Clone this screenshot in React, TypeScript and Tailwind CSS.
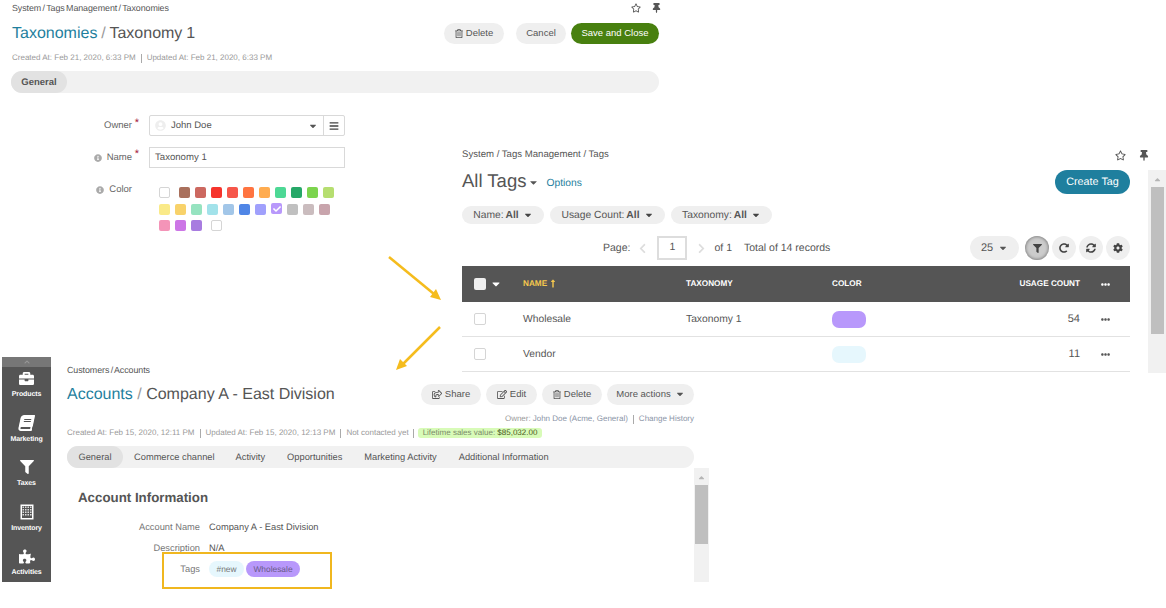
import React from 'react'
import {
  FaRegStar, FaThumbtack, FaRegTrashAlt, FaBars, FaInfoCircle, FaCheck, FaCaretDown, FaCaretUp, FaChevronLeft, FaChevronRight,
  FaChevronUp, FaFilter, FaRedoAlt, FaSyncAlt, FaCog, FaEllipsisH, FaLongArrowAltUp, FaRegShareSquare, FaRegEdit,
  FaBriefcase, FaBook, FaPuzzlePiece, FaUserCircle,
} from 'react-icons/fa'

const teal = 'text-[#1f7f9e]'

function Pill({ children, className = '' }: { children: React.ReactNode; className?: string }) {
  return <button className={`h-[21px] rounded-full bg-[#efefef] text-[#555] text-[9.5px] flex items-center justify-center gap-[3px] ${className}`}>{children}</button>
}

function Crumb({ children }: { children: React.ReactNode }) {
  return <div className="text-[8.9px] leading-[12px] text-[#555] tracking-[-0.07px] [word-spacing:-1px]">{children}</div>
}

function Required() {
  return <span className="absolute -right-[7px] -top-[1px] text-[#a3183a] text-[11px] leading-[11px]">*</span>
}

const row1 = ['#a9705c', '#cc6860', '#f6342c', '#f6564a', '#ff7440', '#ffac50', '#4dd895', '#26a868', '#7cd44e', '#b6de70']
const row2 = ['#faea88', '#f8d26a', '#96e3c0', '#a2e2ea', '#a2c6e8', '#5086e6', '#a0a0fc', '#b898fb', '#c0c0c0', '#cabcbe', '#c8a4ac']
const row3 = ['#f494b8', '#cc76e6', '#a87ce0']

function Swatch({ color, checked }: { color?: string; checked?: boolean }) {
  return (
    <span
      className={`w-[11px] h-[11px] rounded-[2px] flex items-center justify-center ${color ? '' : 'border border-[#d5d5d5] bg-white'} ${checked ? '-translate-y-[1px]' : ''}`}
      style={color ? { backgroundColor: color } : undefined}
    >
      {checked && <FaCheck className="text-white w-[8px] h-[8px]" />}
    </span>
  )
}

function TaxonomyWindow() {
  return (
    <div className="absolute left-0 top-0 w-[665px] h-[240px] bg-white">
      <div className="pl-[12px] pr-[4px] pt-[2px] flex justify-between items-center">
        <Crumb>System / Tags Management / Taxonomies</Crumb>
        <div className="flex items-center gap-[11px] text-[#555]">
          <FaRegStar className="w-[10px] h-[10px]" />
          <FaThumbtack className="w-[9px] h-[10px]" />
        </div>
      </div>
      <div className="pl-[12px] pr-[6px] mt-[9px] flex items-center justify-between">
        <h1 className="text-[16px] leading-[21px] text-[#555] [word-spacing:-0.5px]"><span className={teal}>Taxonomies</span> <span className="text-[#999]">/</span> Taxonomy 1</h1>
        <div className="flex items-center">
          <Pill className="w-[60px] mr-[12px]"><FaRegTrashAlt className="w-[8px] h-[9px]" /> Delete</Pill>
          <Pill className="w-[50px] mr-[5px]">Cancel</Pill>
          <Pill className="w-[88px] !bg-[#48800f] !text-white">Save and Close</Pill>
        </div>
      </div>
      <div className="pl-[12px] mt-[8px] text-[8px] leading-[12px] text-[#999] flex items-center">
        Created At: Feb 21, 2020, 6:33 PM<span className="w-px h-[9px] bg-[#aaa] mx-[5px]" />Updated At: Feb 21, 2020, 6:33 PM
      </div>
      <div className="ml-[11px] w-[648px] mt-[7px] h-[22px] rounded-full bg-[#f1f1f1]">
        <div className="w-[56px] h-[22px] rounded-full bg-[#e2e2e2] text-[#555] text-[9.5px] font-bold flex items-center justify-center pt-[2px]">General</div>
      </div>
      <div className="mt-[22px] flex flex-col">
        <div className="flex items-center h-[21px]">
          <div className="w-[132px] flex justify-end text-[#666] text-[9.5px] pt-[1px]"><span className="relative">Owner<Required /></span></div>
          <div className="ml-[17px] w-[196px] h-[21px] border border-[#d9d9d9] rounded-[2px] flex items-center text-[9.5px] text-[#555]">
            <FaUserCircle className="w-[11px] h-[11px] text-[#eee] ml-[5px] mr-[5px]" />
            <span className="flex-1 pt-[1px]">John Doe</span>
            <FaCaretDown className="w-[10px] h-[10px] text-[#555] mr-[5px]" />
            <span className="w-[21px] h-full border-l border-[#d9d9d9] flex items-center justify-center"><FaBars className="w-[10px] h-[10px] text-[#444]" /></span>
          </div>
        </div>
        <div className="flex items-center h-[21px] mt-[11px]">
          <div className="w-[132px] flex justify-end items-center text-[#666] text-[9.5px]">
            <FaInfoCircle className="w-[8px] h-[8px] text-[#aaa] mr-[5px]" /><span className="relative pt-[1px]">Name<Required /></span>
          </div>
          <div className="ml-[17px] w-[196px] h-[21px] border border-[#d9d9d9] pl-[5px] pt-[1px] flex items-center text-[9.6px] text-[#555]">Taxonomy 1</div>
        </div>
        <div className="flex items-start mt-[16px]">
          <div className="w-[132px] flex justify-end items-center text-[#666] text-[9.5px] leading-[12px]">
            <FaInfoCircle className="w-[8px] h-[8px] text-[#aaa] mr-[5px]" />Color
          </div>
          <div className="ml-[27px] mt-[3px] flex flex-col gap-[5px]">
            <div className="flex gap-[5px]">
              <span className="mr-[4px]"><Swatch /></span>
              {row1.map(c => <Swatch key={c} color={c} />)}
            </div>
            <div className="flex gap-[5px] mt-[1px]">
              {row2.map((c, i) => <Swatch key={c} color={c} checked={i === 7} />)}
            </div>
            <div className="flex gap-[5px]">
              {row3.map(c => <Swatch key={c} color={c} />)}
              <span className="ml-[4px]"><Swatch /></span>
            </div>
          </div>
        </div>
      </div>
    </div>
  )
}

function RoundBtn({ children, active }: { children: React.ReactNode; active?: boolean }) {
  return (
    <span className={`w-[24px] h-[24px] rounded-full flex items-center justify-center text-[#444] ${active ? 'bg-[#ccc] shadow-[inset_0_0_3px_1px_#888]' : 'bg-[#efefef]'}`}>{children}</span>
  )
}

function FilterPill({ label, width }: { label: string; width: string }) {
  return (
    <span className={`h-[18px] ${width} rounded-full bg-[#efefef] text-[10.3px] text-[#555] flex items-center justify-center gap-[4px]`}>
      <span className="pt-[1px]">{label}: <b className="font-bold -ml-[1px]">All</b></span><FaCaretDown className="w-[10px] h-[10px] text-[#444]" />
    </span>
  )
}

function TagRow({ name, taxonomy, color, count }: { name: string; taxonomy?: string; color: string; count: number }) {
  return (
    <div className="flex items-center h-[35px] border-b border-[#e2e2e2] text-[10.3px] text-[#555]">
      <span className="ml-[12px] w-[12px] h-[12px] border border-[#d5d5d5] rounded-[2px] bg-white" />
      <span className="ml-[37px] w-[163px] pt-[1px]">{name}</span>
      <span className="w-[146px] pt-[1px]">{taxonomy}</span>
      <span className="w-[34px] h-[17px] rounded-[7px]" style={{ backgroundColor: color }} />
      <span className="w-[214px] text-right text-[11px]">{count}</span>
      <FaEllipsisH className="ml-[21px] w-[9px] h-[9px] text-[#555]" />
    </div>
  )
}

function TagsWindow() {
  return (
    <div className="absolute left-[450px] top-[140px] w-[716px] h-[233px] bg-white overflow-hidden flex">
      <div className="ml-[12px] w-[668px]">
        <div className="pt-[9px] flex justify-between items-center">
          <div className="text-[9.6px] leading-[12px] text-[#555]">System / Tags Management / Tags</div>
          <div className="flex items-center gap-[13px] text-[#555] -mr-[19px]">
            <FaRegStar className="w-[11px] h-[11px]" />
            <FaThumbtack className="w-[10px] h-[11px]" />
          </div>
        </div>
        <div className="flex justify-between items-center mt-[9px]">
          <div className="flex items-center text-[#555]">
            <h2 className="text-[18.5px] leading-[24px] -mt-[2px]">All Tags</h2>
            <FaCaretDown className="w-[11px] h-[11px] ml-[2px]" />
            <span className={`ml-[7px] mt-[3px] text-[10.3px] ${teal}`}>Options</span>
          </div>
          <span className="w-[75px] h-[24px] rounded-full bg-[#1f7f9e] text-white text-[10.8px] flex items-center justify-center">Create Tag</span>
        </div>
        <div className="flex gap-[6px] mt-[12px]">
          <FilterPill label="Name" width="w-[82px]" />
          <FilterPill label="Usage Count" width="w-[115px]" />
          <FilterPill label="Taxonomy" width="w-[101px]" />
        </div>
        <div className="flex items-center h-[24px] mt-[12px] text-[10.5px] text-[#555]">
          <span className="ml-[141px] pt-[2px]">Page:</span>
          <FaChevronLeft className="ml-[8px] w-[9px] h-[11px] text-[#ddd]" />
          <span className="ml-[10px] w-[30px] h-[24px] border-2 border-[#ddd] flex items-center justify-center">1</span>
          <FaChevronRight className="ml-[10px] w-[9px] h-[11px] text-[#ddd]" />
          <span className="ml-[8px] pt-[2px]">of 1</span>
          <span className="ml-[12px] pt-[2px]">Total of 14 records</span>
          <div className="ml-auto flex items-center gap-[3px]">
            <span className="w-[49px] h-[24px] mr-[3px] rounded-full bg-[#efefef] flex items-center justify-center gap-[5px] text-[11px]">25<FaCaretDown className="w-[10px] h-[10px]" /></span>
            <RoundBtn active><FaFilter className="w-[9px] h-[9px]" /></RoundBtn>
            <RoundBtn><FaRedoAlt className="w-[10px] h-[10px]" /></RoundBtn>
            <RoundBtn><FaSyncAlt className="w-[10px] h-[10px]" /></RoundBtn>
            <RoundBtn><FaCog className="w-[10px] h-[10px]" /></RoundBtn>
          </div>
        </div>
        <div className="flex items-center h-[36px] mt-[6px] bg-[#555] text-white text-[8.2px] font-bold">
          <span className="ml-[12px] w-[12px] h-[12px] bg-[#eee] rounded-[2px]" />
          <FaCaretDown className="ml-[4px] w-[12px] h-[12px]" />
          <span className="ml-[21px] w-[163px] text-[#f5c84e] flex items-center gap-[2px]">NAME<FaLongArrowAltUp className="w-[8px] h-[9px]" /></span>
          <span className="w-[146px]">TAXONOMY</span>
          <span className="w-[34px]">COLOR</span>
          <span className="w-[214px] text-right">USAGE COUNT</span>
          <FaEllipsisH className="ml-[21px] w-[9px] h-[9px]" />
        </div>
        <TagRow name="Wholesale" taxonomy="Taxonomy 1" color="#b898fb" count={54} />
        <TagRow name="Vendor" color="#e6f7fd" count={11} />
      </div>
      <div className="ml-[18px] mt-[30px] w-[18px] bg-[#f1f1f1] flex flex-col items-center">
        <FaCaretUp className="w-[9px] h-[9px] text-[#b5b5b5] mt-[5px]" />
        <div className="w-[13px] h-[147px] bg-[#bfbfbf] mt-[3px]" />
      </div>
    </div>
  )
}

const navItems = [
  { label: 'Products', icon: <FaBriefcase className="w-[17px] h-[15px]" />, height: 'h-[45px]' },
  { label: 'Marketing', icon: <FaBook className="w-[15px] h-[16px] -skew-x-12" />, height: 'h-[44px]' },
  { label: 'Taxes', icon: <FaFilter className="w-[14px] h-[14px]" />, height: 'h-[45px]' },
  { label: 'Inventory', icon: <BuildingIcon />, height: 'h-[44px]' },
  { label: 'Activities', icon: <FaPuzzlePiece className="w-[16px] h-[15px]" />, height: 'h-[40px]' },
]

function BuildingIcon() {
  return (
    <svg viewBox="0 0 14 16" className="w-[14px] h-[16px]" fill="none">
      <rect x="0.5" y="0.5" width="13" height="15" fill="#fff" />
      <rect x="2" y="2" width="10" height="12" fill="#555" />
      {[2.5, 5, 7.5, 10].map(x => [2.5, 5, 7.5, 10].map(y => <rect key={`${x}-${y}`} x={x} y={y} width="1.5" height="1.5" fill="#ddd" />))}
    </svg>
  )
}

function SideNav() {
  return (
    <div className="w-[49px] h-full bg-[#555] text-white shrink-0">
      <div className="h-[10px] bg-[#777] flex items-center justify-center"><FaChevronUp className="w-[6px] h-[6px] text-[#999]" /></div>
      {navItems.map(n => (
        <div key={n.label} className={`${n.height} flex flex-col items-center justify-start pt-[2px]`}>
          <div className="h-[18px] flex items-center justify-center">{n.icon}</div>
          <div className="text-[7px] leading-[10px] font-bold mt-[3px] tracking-[-0.1px]">{n.label}</div>
        </div>
      ))}
    </div>
  )
}

function AccountWindow() {
  return (
    <div className="absolute left-[2px] top-[357px] w-[707px] h-[225px] bg-white flex">
      <SideNav />
      <div className="pl-[16px] w-[643px] shrink-0">
        <div className="pt-[7px]"><Crumb>Customers / Accounts</Crumb></div>
        <div className="mt-[5px] h-[26px] flex items-center justify-between">
          <h1 className="text-[16px] leading-[21px] text-[#555]"><span className={teal}>Accounts</span> <span className="text-[#999]">/</span> Company A - East Division</h1>
          <div className="flex items-center gap-[5px]">
            <Pill className="w-[60px]"><FaRegShareSquare className="w-[10px] h-[9px]" /> Share</Pill>
            <Pill className="w-[51px]"><FaRegEdit className="w-[10px] h-[9px]" /> Edit</Pill>
            <Pill className="w-[60px]"><FaRegTrashAlt className="w-[8px] h-[9px]" /> Delete</Pill>
            <Pill className="w-[87px] gap-[4px]">More actions <FaCaretDown className="w-[10px] h-[10px]" /></Pill>
          </div>
        </div>
        <div className="mt-[6px] flex justify-end items-center text-[8px] leading-[12px] text-[#999]">
          Owner: <span className="text-[#8a94a6] ml-[2px]">John Doe (Acme, General)</span><span className="w-px h-[9px] bg-[#aaa] mx-[5px]" /><span className="text-[#8a94a6]">Change History</span>
        </div>
        <div className="mt-[2px] flex items-center text-[8px] leading-[12px] text-[#999]">
          Created At: Feb 15, 2020, 12:11 PM<span className="w-px h-[9px] bg-[#aaa] mx-[5px]" />Updated At: Feb 15, 2020, 12:13 PM<span className="w-px h-[9px] bg-[#aaa] mx-[5px]" />Not contacted yet<span className="w-px h-[9px] bg-[#aaa] mx-[4px]" />
          <span className="h-[10px] px-[5px] rounded-[3px] bg-[#d8fbb8] flex items-center text-[#7a8a6a]">Lifetime sales value:&nbsp;<span className="text-[#4a5a20]">$85,032.00</span></span>
        </div>
        <div className="mt-[7px] h-[22px] rounded-full bg-[#f1f1f1] flex items-center text-[9.3px] text-[#555]">
          <span className="w-[56px] h-[22px] rounded-full bg-[#e2e2e2] flex items-center justify-center pt-[2px]">General</span>
          <span className="ml-[11px] pt-[2px]">Commerce channel</span>
          <span className="ml-[21px] pt-[2px]">Activity</span>
          <span className="ml-[22px] pt-[2px]">Opportunities</span>
          <span className="ml-[22px] pt-[2px]">Marketing Activity</span>
          <span className="ml-[22px] pt-[2px]">Additional Information</span>
        </div>
        <h3 className="ml-[11px] mt-[22px] text-[13.3px] leading-[16px] font-bold text-[#555]">Account Information</h3>
        <div className="mt-[15px] text-[9.3px] leading-[12px] text-[#555] flex flex-col gap-[9px]">
          <div className="flex"><span className="w-[133px] text-right text-[#777] mr-[9px]">Account Name</span>Company A - East Division</div>
          <div className="flex"><span className="w-[133px] text-right text-[#777] mr-[9px]">Description</span>N/A</div>
          <div className="flex items-center"><span className="w-[133px] text-right text-[#777] mr-[9px]">Tags</span>
            <span className="-my-[2px] h-[16px] w-[35px] rounded-full bg-[#e6f7fd] text-[#777] text-[8.4px] flex items-center justify-center">#new</span>
            <span className="-my-[2px] ml-[2px] h-[16px] w-[54px] rounded-full bg-[#b898fb] text-[#6a5a8a] text-[8.4px] flex items-center justify-center">Wholesale</span>
          </div>
        </div>
      </div>
      <div className="mt-[111px] w-[17px] bg-[#f1f1f1] flex flex-col items-center">
        <FaCaretUp className="w-[9px] h-[9px] text-[#b5b5b5] mt-[5px]" />
        <div className="w-[13px] h-[59px] bg-[#bfbfbf] mt-[3px]" />
      </div>
    </div>
  )
}

export default function App() {
  return (
    <div className="relative w-[1166px] h-[608px] bg-white overflow-hidden font-['Liberation_Sans',Arial,sans-serif] [text-rendering:geometricPrecision]">
      <TaxonomyWindow />
      <AccountWindow />
      <TagsWindow />
      {/* callouts on top of the screenshots */}
      <svg className="absolute inset-0 w-[1166px] h-[608px] pointer-events-none" viewBox="0 0 1166 608">
        <g stroke="#f5bc1d" strokeWidth="2.5" fill="#f5bc1d">
          <line x1="389" y1="257" x2="434" y2="294" />
          <polygon points="441,300 430,297 436,289" stroke="none" />
          <line x1="440" y1="327" x2="402" y2="365" />
          <polygon points="396,370 400,359 407,366" stroke="none" />
        </g>
      </svg>
      <div className="absolute left-[162px] top-[552px] w-[170px] h-[37px] border-2 border-[#f0b71f]" />
    </div>
  )
}
